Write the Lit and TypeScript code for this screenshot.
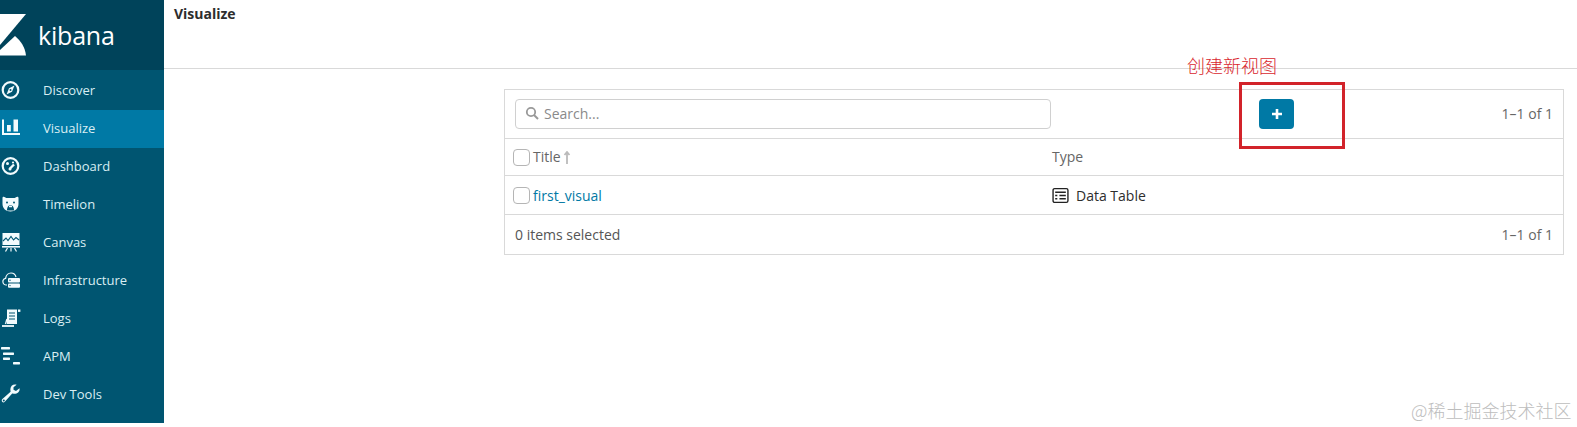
import { LitElement, html, css, svg } from "lit";
import { customElement } from "lit/decorators.js";

const icons: Record<string, unknown> = {
  Discover: svg`<circle cx="10.5" cy="10" r="7.8" fill="none" stroke="currentColor" stroke-width="2.2"/><path d="M14.5 5.500 L12 11.800 L6.500 14.500 L9 8.200 Z" fill="currentColor"/><circle cx="10.500" cy="10" r="1" fill="#005571"/>`,
  Visualize: svg`<path d="M3 1.500v14.500h17" fill="none" stroke="currentColor" stroke-width="2"/><rect x="7" y="7" width="3.800" height="6.500" fill="currentColor"/><rect x="13.500" y="1.500" width="4.500" height="12" fill="currentColor"/>`,
  Dashboard: svg`<circle cx="10.500" cy="10" r="7.800" fill="none" stroke="currentColor" stroke-width="2.200"/><circle cx="7.500" cy="7.500" r="1.500" fill="currentColor"/><circle cx="13" cy="6.500" r="1.100" fill="currentColor"/><path d="M14 8.500 L10 12.500" stroke="currentColor" stroke-width="2.400" fill="none"/><circle cx="10" cy="13" r="1.500" fill="currentColor"/>`,
  Timelion: svg`<path d="M2.500 4 C2.500 2.500 4 2.500 5 3.300 C5.500 3.800 6 4 7 4 H14 C15 4 15.500 3.800 16 3.300 C17 2.500 18.500 2.500 18.500 4 V10 C18.500 14.500 15 17.500 10.500 17.500 C6 17.500 2.500 14.500 2.500 10 Z" fill="currentColor"/><circle cx="7" cy="8.500" r="1" fill="#005571"/><circle cx="14" cy="8.500" r="1" fill="#005571"/><path d="M7 16.500 C7 12.500 9 11 10.500 11 C12 11 14 12.500 14 16.500 Z" fill="#005571"/><rect x="9" y="11.500" width="3" height="1.800" rx=".5" fill="currentColor"/>`,
  Canvas: svg`<rect x="2.500" y="1" width="17" height="12" fill="currentColor"/><path d="M3 9 L6 6 L8 8.500 L11 4.500 L13.500 8 L16 5.500 L19 8" fill="none" stroke="#005571" stroke-width="1.100"/><rect x="2" y="14" width="18" height="1.600" fill="currentColor"/><path d="M7.500 16 L5.500 19.500 M11 16 V19.500 M14.500 16 L16.500 19.500" stroke="currentColor" stroke-width="1.200"/>`,
  Infrastructure: svg`<path d="M7 15 H6 C3.500 15 2.500 12.500 3 10.500 C3.500 9 4.600 8.400 5.600 8.400 C6 5 8.500 3 11 3 C13.500 3 15.400 4.600 16 7" fill="none" stroke="currentColor" stroke-width="1.200"/><rect x="8" y="8" width="12" height="4.400" rx="1" fill="currentColor"/><rect x="8" y="13.400" width="12" height="4.400" rx="1" fill="currentColor"/><circle cx="10" cy="10.200" r=".7" fill="#005571"/><circle cx="10" cy="15.600" r=".7" fill="#005571"/>`,
  Logs: svg`<path d="M7 1.500 H17 V16 H7 Z" fill="currentColor"/><path d="M9 5h6M9 8h6M9 11h6" stroke="#005571" stroke-width="1.200"/><rect x="18" y="1.500" width="2.400" height="2.400" fill="currentColor"/><path d="M2 18 H14" stroke="currentColor" stroke-width="1.800"/><path d="M5.500 16 L7 11" stroke="currentColor" stroke-width="1.400"/>`,
  APM: svg`<rect x="1" y="1" width="9" height="2.400" rx=".6" fill="currentColor"/><rect x="3" y="6.500" width="11" height="2.400" rx=".6" fill="currentColor"/><rect x="3" y="11.500" width="7" height="2.400" rx=".6" fill="currentColor"/><rect x="13" y="16" width="7" height="2.400" rx=".6" fill="currentColor"/>`,
  "Dev Tools": svg`<path d="M19.500 4.200 L16 7 L13.500 5.800 L13.500 3.200 L16.600 .7 C13 -.3 10 2.200 10.400 6 L10.600 7.800 L2.400 15 C.6 16.800 2.800 19.600 4.800 17.800 L12.200 9.600 L14 9.800 C17.600 10 20.200 7.600 19.500 4.200 Z" fill="currentColor"/><circle cx="3.800" cy="16.400" r="1" fill="#005571"/>`,
};

const items = ["Discover", "Visualize", "Dashboard", "Timelion", "Canvas", "Infrastructure", "Logs", "APM", "Dev Tools"];

@customElement("app-root")
export class AppRoot extends LitElement {
  static styles = css`
    :host { display: block; position: relative; height: 427px; width: 1577px; overflow: hidden; background: #fff;
      font-family: "Open Sans", "Noto Sans CJK SC", sans-serif; font-size: 14px; color: #3f3f3f; }
    .page { display: flex; height: 427px; align-items: flex-start; }
    .side { width: 164px; height: 423px; flex: none; background: #005571; color: #d9eef3; font-size: 13px; }
    .brand { height: 70px; background: #00435a; display: flex; align-items: center; gap: 11px; color: #fff; }
    .brand svg { width: 27px; height: 42px; flex: none; }
    .brand span { font-size: 25px; line-height: 28px; font-weight: 500; letter-spacing: -0.2px; margin-top: -1px; }
    .nav { height: 38px; box-sizing: border-box; padding-bottom: 2px; display: flex; align-items: center; }
    .nav.on { background: #0079a5; }
    .nav.first { height: 40px; padding-bottom: 0; }
    .nav svg { width: 21px; height: 20px; flex: none; margin-right: 22px; color: #f2fbfd; }
    .main { flex: 1; min-width: 0; }
    .head { height: 69px; border-bottom: 1px solid #d9d9d9; padding: 5px 0 0 10px; box-sizing: border-box; font-weight: 700; color: #2d2d2d; line-height: 18px; }
    .wrap { margin: 20px 13px 0 340px; border: 1px solid #d9d9d9; }
    .row { display: flex; align-items: center; border-bottom: 1px solid #d9d9d9; padding: 0 10px 0 8px; }
    .row:last-child { border-bottom: 0; }
    .tool { height: 48px; padding-left: 10px; }
    .search { width: 536px; height: 30px; box-sizing: border-box; border: 1px solid #d0d0d0; border-radius: 4px; display: flex; align-items: center; gap: 5px; padding: 0 0 2px 9px; color: #8a8a8a; flex: none; }
    .search svg { width: 14px; height: 14px; }
    .add { width: 35px; height: 30px; flex: none; margin-left: 208px; border-radius: 4px; background: #0079a5; display: flex; align-items: center; justify-content: center; }
    .add svg { width: 12px; height: 12px; }
    .count { margin-left: auto; color: #666; }
    .tool .count { margin-bottom: 2px; }
    .hd { height: 36px; box-sizing: content-box; color: #666; }
    .hd span:not(.box) { margin-bottom: 2px; }
    .data { height: 38px; }
    .foot { height: 39px; box-sizing: border-box; padding: 0 10px 1px 10px; color: #555; }
    .col1 { width: 539px; flex: none; display: flex; align-items: center; gap: 3px; }
    .box { width: 15px; height: 15px; border: 1px solid #b5b5b5; border-radius: 4px; flex: none; }
    .link { color: #0079a5; }
    .arrow { width: 8px; height: 13px; margin-left: -1px; }
    .type { display: flex; align-items: center; gap: 7px; color: #2d2d2d; }
    .type svg { width: 17px; height: 17px; }
    .note { position: absolute; left: 1187px; top: 52px; font-size: 18px; line-height: 26px; color: #d9272e; font-family: "Noto Sans CJK SC", sans-serif; font-weight: 300; }
    .mark { position: absolute; left: 1239px; top: 82px; width: 106px; height: 67px; box-sizing: border-box; border: 3px solid #d2232a; }
    .water { position: absolute; left: 1411px; top: 399px; font-size: 18px; line-height: 22px; color: #bdbdbd; font-family: "Noto Sans CJK SC", sans-serif; font-weight: 300; white-space: nowrap; }
  `;

  render() {
    return html`
      <div class="page">
        <aside class="side">
          <div class="brand">
            <svg viewBox="0 0 27 42"><path d="M0 0 H26 L0 31 Z" fill="#fff"/><path d="M0 41.500 V36 L15 22 C21 27 25 33 26 41.500 Z" fill="#fff"/></svg>
            <span>kibana</span>
          </div>
          ${items.map(
            (n, i) => html`<div class="nav ${n === "Visualize" ? "on" : ""} ${i === 0 ? "first" : ""}">
              <svg viewBox="0 0 21 20">${icons[n]}</svg><span>${n}</span>
            </div>`
          )}
        </aside>
        <main class="main">
          <div class="head">Visualize</div>
          <div class="wrap">
            <div class="row tool">
              <div class="search">
                <svg viewBox="0 0 14 14"><circle cx="6" cy="6" r="4.200" fill="none" stroke="#999" stroke-width="1.800"/><path d="M9 9l4 4" stroke="#999" stroke-width="2"/></svg>
                <span>Search...</span>
              </div>
              <div class="add"><svg viewBox="0 0 12 12"><path d="M6 1v10M1 6h10" stroke="#fff" stroke-width="2.600"/></svg></div>
              <span class="count">1–1 of 1</span>
            </div>
            <div class="row hd">
              <div class="col1"><span class="box"></span><span>Title</span>
                <svg class="arrow" viewBox="0 0 8 13"><path d="M4 1v12M1.500 4 4 1l2.500 3" fill="none" stroke="#bbb" stroke-width="1.800"/></svg></div>
              <span>Type</span>
            </div>
            <div class="row data">
              <div class="col1"><span class="box"></span><span class="link">first_visual</span></div>
              <div class="type">
                <svg viewBox="0 0 16 16"><rect x="1" y="1.500" width="14" height="13" rx="1.500" fill="none" stroke="#222" stroke-width="1.300"/><path d="M3 5h10M3 8h2M7 8h6M3 11h2M7 11h6" stroke="#222" stroke-width="1.300"/></svg>
                <span>Data Table</span>
              </div>
            </div>
            <div class="row foot"><span>0 items selected</span><span class="count">1–1 of 1</span></div>
          </div>
        </main>
      </div>
      <div class="note">创建新视图</div>
      <div class="mark"></div>
      <div class="water">@稀土掘金技术社区</div>
    `;
  }
}
